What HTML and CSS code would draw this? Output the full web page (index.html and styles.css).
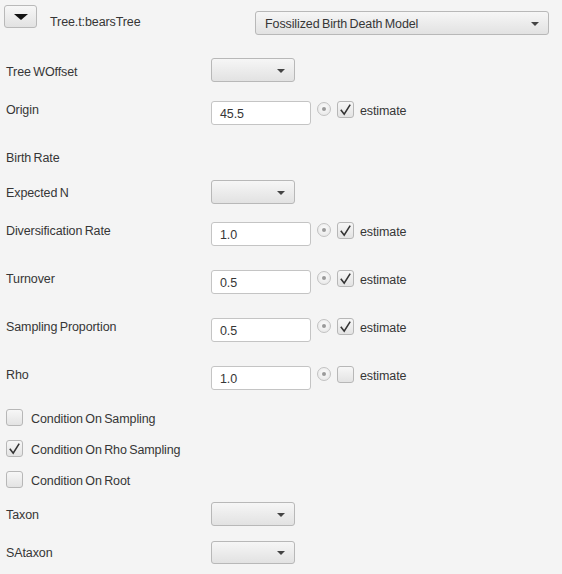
FILE: index.html
```html
<!DOCTYPE html>
<html>
<head>
<meta charset="utf-8">
<link rel="stylesheet" href="styles.css">
</head>
<body>
<div class="panel">
  <div class="header">
    <button class="expander"><span class="tri-big"></span></button>
    <span class="title">Tree.t:bearsTree</span>
    <div class="combo wide"><span class="combo-text">Fossilized Birth Death Model</span><span class="arrow"></span></div>
  </div>

  <div class="row r-woffset">
    <span class="label combo-label">Tree WOffset</span>
    <div class="combo"><span class="arrow"></span></div>
  </div>

  <div class="row r48">
    <span class="label">Origin</span>
    <div class="field">45.5</div>
    <span class="radio"><span class="dot"></span></span>
    <span class="check checked"><svg viewBox="0 0 17 17" width="17" height="17"><path d="M3.8 8.8 L7.2 13.2 L13.2 3.6" fill="none" stroke="#333" stroke-width="1.6"/></svg></span>
    <span class="est">estimate</span>
  </div>

  <div class="row r-birth">
    <span class="label">Birth Rate</span>
  </div>

  <div class="row r-expn">
    <span class="label combo-label">Expected N</span>
    <div class="combo"><span class="arrow"></span></div>
  </div>

  <div class="row r48">
    <span class="label">Diversification Rate</span>
    <div class="field">1.0</div>
    <span class="radio"><span class="dot"></span></span>
    <span class="check checked"><svg viewBox="0 0 17 17" width="17" height="17"><path d="M3.8 8.8 L7.2 13.2 L13.2 3.6" fill="none" stroke="#333" stroke-width="1.6"/></svg></span>
    <span class="est">estimate</span>
  </div>

  <div class="row r48">
    <span class="label">Turnover</span>
    <div class="field">0.5</div>
    <span class="radio"><span class="dot"></span></span>
    <span class="check checked"><svg viewBox="0 0 17 17" width="17" height="17"><path d="M3.8 8.8 L7.2 13.2 L13.2 3.6" fill="none" stroke="#333" stroke-width="1.6"/></svg></span>
    <span class="est">estimate</span>
  </div>

  <div class="row r48">
    <span class="label">Sampling Proportion</span>
    <div class="field">0.5</div>
    <span class="radio"><span class="dot"></span></span>
    <span class="check checked"><svg viewBox="0 0 17 17" width="17" height="17"><path d="M3.8 8.8 L7.2 13.2 L13.2 3.6" fill="none" stroke="#333" stroke-width="1.6"/></svg></span>
    <span class="est">estimate</span>
  </div>

  <div class="row r-rho">
    <span class="label">Rho</span>
    <div class="field">1.0</div>
    <span class="radio"><span class="dot"></span></span>
    <span class="check"></span>
    <span class="est">estimate</span>
  </div>

  <div class="row cb-row">
    <span class="check"></span>
    <span class="cb-text">Condition On Sampling</span>
  </div>
  <div class="row cb-row">
    <span class="check checked"><svg viewBox="0 0 17 17" width="17" height="17"><path d="M3.8 8.8 L7.2 13.2 L13.2 3.6" fill="none" stroke="#333" stroke-width="1.6"/></svg></span>
    <span class="cb-text">Condition On Rho Sampling</span>
  </div>
  <div class="row cb-row">
    <span class="check"></span>
    <span class="cb-text">Condition On Root</span>
  </div>

  <div class="row r-taxon">
    <span class="label combo-label">Taxon</span>
    <div class="combo"><span class="arrow"></span></div>
  </div>
  <div class="row r-sataxon">
    <span class="label combo-label">SAtaxon</span>
    <div class="combo"><span class="arrow"></span></div>
  </div>
</div>
</body>
</html>
```

FILE: styles.css
```css
html, body {
  margin: 0;
  padding: 0;
  background: #f4f4f4;
}
body {
  width: 562px;
  height: 574px;
  overflow: hidden;
  font-family: "Liberation Sans", Arial, sans-serif;
  font-size: 12.5px;
  letter-spacing: -0.1px;
  word-spacing: -1px;
  color: #363636;
}
.panel {
  display: flex;
  flex-direction: column;
}
.header {
  height: 58px;
  display: flex;
  align-items: flex-start;
  box-sizing: border-box;
}
.expander {
  margin: 5px 0 0 4px;
  width: 33px;
  height: 23px;
  border: 1px solid #b9b9b9;
  border-radius: 3px;
  background: linear-gradient(#f7f7f7, #e2e2e2);
  padding: 0;
  display: flex;
  align-items: center;
  justify-content: center;
}
.tri-big {
  width: 0;
  height: 0;
  border-left: 7px solid transparent;
  border-right: 7px solid transparent;
  border-top: 6px solid #111;
  margin-top: 1px;
}
.title {
  margin: 14px 0 0 13px;
  line-height: 16px;
}
.combo {
  width: 84px;
  height: 24px;
  box-sizing: border-box;
  border: 1px solid #b8b8b8;
  border-radius: 3px;
  background: linear-gradient(#f6f6f6, #e2e2e2);
  display: flex;
  align-items: center;
  justify-content: flex-end;
  padding-right: 9px;
}
.combo.wide {
  width: 294px;
  margin: 11px 13px 0 auto;
  justify-content: space-between;
  padding-left: 9px;
}
.combo-text {
  line-height: 16px;
  padding-top: 1px;
}
.arrow {
  width: 0;
  height: 0;
  border-left: 4px solid transparent;
  border-right: 4px solid transparent;
  border-top: 4px solid #444;
  margin-top: 1px;
}
.row {
  display: flex;
  align-items: flex-start;
  box-sizing: border-box;
}
.label {
  width: 211px;
  padding-left: 6px;
  box-sizing: border-box;
  line-height: 16px;
  padding-top: 1px;
  flex: none;
}
.combo-label {
  line-height: 24px;
  padding-top: 2px;
}
.r-woffset { height: 43px; }
.r48 { height: 48px; }
.r-birth { height: 31px; }
.r-expn { height: 42px; }
.r-expn .combo-label { padding-top: 1px; }
.r-rho { height: 43px; }
.cb-row { height: 31px; padding-left: 6px; }
.r-taxon { height: 39px; }
.r-taxon .combo-label { padding-top: 1px; }
.r-sataxon { height: 33px; }
.r-sataxon .combo-label { padding-top: 0; }
.r-sataxon .combo { height: 23px; }
.field {
  width: 100px;
  height: 24px;
  box-sizing: border-box;
  background: #fff;
  border: 1px solid #c4c4c4;
  border-radius: 3px;
  padding: 1px 8px 0;
  line-height: 23px;
}
.radio {
  width: 14px;
  height: 14px;
  box-sizing: border-box;
  border-radius: 50%;
  border: 1px solid #c2c2c2;
  background: radial-gradient(circle at 50% 40%, #fbfbfb, #e4e4e4);
  margin: 1px 0 0 6px;
  display: flex;
  align-items: center;
  justify-content: center;
}
.dot {
  width: 4px;
  height: 4px;
  border-radius: 50%;
  background: #9a9a9a;
}
.check {
  width: 17px;
  height: 17px;
  box-sizing: border-box;
  border: 1px solid #b7b7b7;
  border-radius: 3px;
  background: linear-gradient(#f7f7f7, #e3e3e3);
  margin-left: 6px;
  display: flex;
  flex: none;
  position: relative;
}
.check svg {
  position: absolute;
  left: -1px;
  top: -1px;
}
.cb-row .check { margin-left: 0; }
.est {
  margin-left: 6px;
  line-height: 18px;
  padding-top: 1px;
}
.cb-text {
  margin-left: 8px;
  line-height: 18px;
  padding-top: 1px;
}
```
